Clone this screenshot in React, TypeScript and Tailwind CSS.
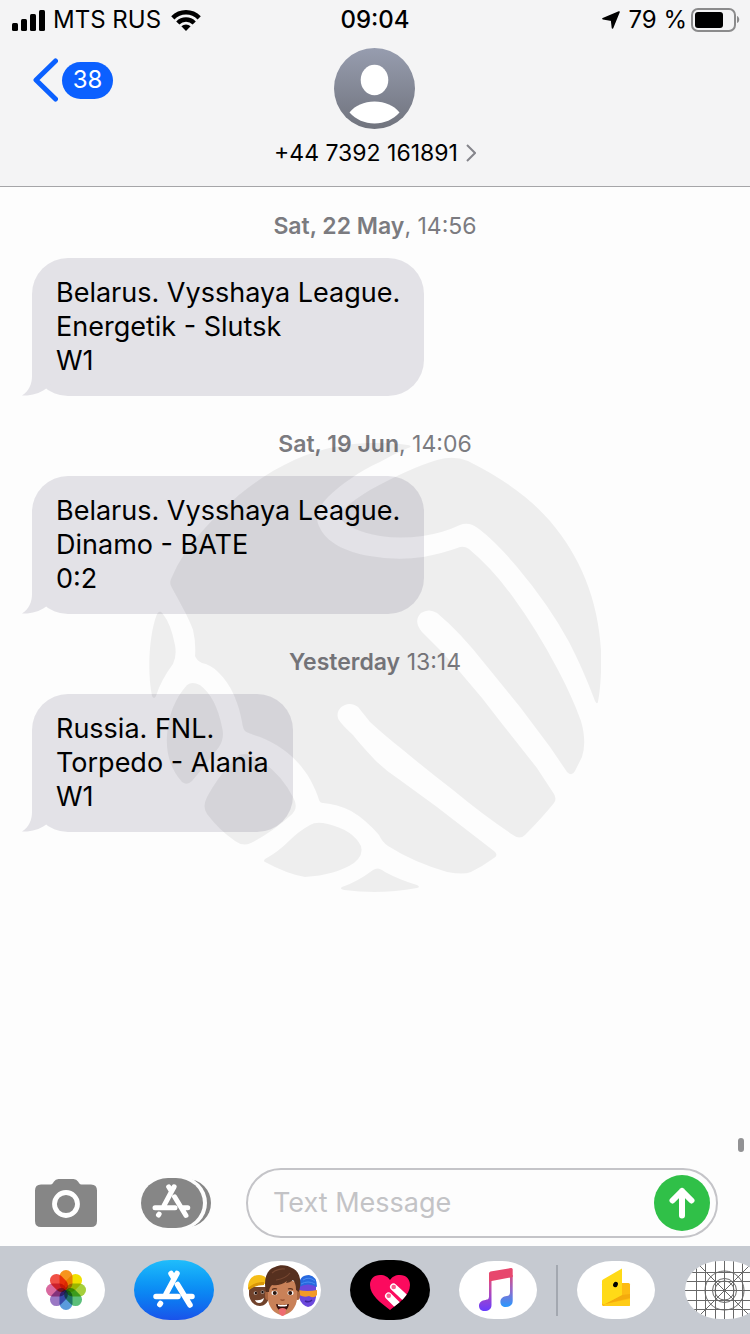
import type { ReactNode } from "react";
import clsx from "clsx";

interface Message {
  day: string;
  time: string;
  lines: string[];
}

const MESSAGES: Message[] = [
  { day: "Sat, 22 May", time: ", 14:56", lines: ["Belarus. Vysshaya League.", "Energetik - Slutsk", "W1"] },
  { day: "Sat, 19 Jun", time: ", 14:06", lines: ["Belarus. Vysshaya League.", "Dinamo - BATE", "0:2"] },
  { day: "Yesterday", time: " 13:14", lines: ["Russia. FNL.", "Torpedo - Alania", "W1"] },
];

const PETALS = ["#f7941d", "#f0e000", "#a5cf3c", "#5cbf7a", "#5a9bdc", "#9a78c4", "#d9699f", "#f05045"];

function StatusBar() {
  return (
    <div className="grid h-10 grid-cols-3 items-center px-2.5 text-2xl">
      <div className="flex items-center gap-2 pl-0.5">
        <svg width="33" height="21" viewBox="0 0 33 21" aria-hidden="true">
          <rect x="0" y="13" width="6" height="8" rx="1.5" />
          <rect x="9" y="9" width="6" height="12" rx="1.5" />
          <rect x="18" y="4" width="6" height="17" rx="1.5" />
          <rect x="27" y="0" width="6" height="21" rx="1.5" />
        </svg>
        <span>MTS RUS</span>
        <svg width="30" height="22" viewBox="0 0 30 22" fill="none" stroke="#000" strokeWidth="4.5" className="ml-0.5" aria-hidden="true">
          <path d="M1.8 8.8a18.6 18.6 0 0 1 26.4 0" />
          <path d="M6.8 14a11.6 11.6 0 0 1 16.4 0" />
          <path d="M15 22l-4.6-4.7a6.5 6.5 0 0 1 9.2 0z" fill="#000" stroke="none" />
        </svg>
      </div>
      <span className="text-center font-medium">09:04</span>
      <div className="flex items-center justify-end">
        <svg width="18" height="18" viewBox="0 0 18 18" className="mr-2" aria-hidden="true">
          <path d="M17 1L1 7.800l8.600 1.400L10.500 17z" stroke="#000" strokeWidth="1.600" strokeLinejoin="round" />
        </svg>
        <span>79 %</span>
        <svg width="49" height="24" viewBox="0 0 49 24" className="ml-1" aria-hidden="true">
          <rect x="1" y="1" width="43" height="22" rx="6" fill="none" stroke="#8b8b8c" strokeWidth="2" />
          <rect x="4" y="4" width="28" height="16" rx="3" />
          <path d="M46 8c3 1 3 6 0 7z" fill="#8b8b8c" />
        </svg>
      </div>
    </div>
  );
}

function Header() {
  return (
    <header className="border-b border-[#a5a5a8] bg-[#f4f4f5]">
      <StatusBar />
      <div className="grid h-[146px] grid-cols-3 items-start px-8 pt-2">
        <a href="#" aria-label="Back, 38 unread" className="flex items-center gap-1 pt-2.5 text-white">
          <svg width="26" height="44" viewBox="0 0 26 44" fill="none" stroke="#0b60ff" strokeWidth="5" strokeLinecap="round" strokeLinejoin="round" aria-hidden="true">
            <path d="M23.500 3L4 22l19.500 19" />
          </svg>
          <span className="flex h-[37px] w-[51px] items-center justify-center rounded-full bg-[#0b60ff] text-2xl">38</span>
        </a>
        <a href="#" className="flex flex-col items-center gap-2 justify-self-center whitespace-nowrap">
          <svg width="81" height="81" viewBox="0 0 81 81" aria-hidden="true">
            <defs>
              <linearGradient id="avatar" x2="0" y2="1">
                <stop stopColor="#979daf" />
                <stop offset="1" stopColor="#70737d" />
              </linearGradient>
            </defs>
            <circle cx="40.5" cy="40.5" r="40.5" fill="url(#avatar)" />
            <ellipse cx="40.5" cy="32" rx="13.8" ry="15.2" fill="#fff" />
            <path d="M15.5 64.5C21 57.5 30 53.5 40.5 53.5S60 57.5 65.5 64.5C59 71.5 50.5 75.5 40.5 75.5S22 71.5 15.5 64.5z" fill="#fff" />
          </svg>
          <span className="flex items-center gap-2 text-[23px] leading-8">
            +44 7392 161891
            <svg width="10" height="18" viewBox="0 0 10 18" fill="none" stroke="#85858b" strokeWidth="2" aria-hidden="true">
              <path d="M1 1l8 8-8 8" />
            </svg>
          </span>
        </a>
      </div>
    </header>
  );
}

function Bubble({ lines }: { lines: string[] }) {
  return (
    <div className="relative w-fit rounded-[36px] bg-[#e3e2e7] px-6 py-[18px] text-[27px] leading-[34px] whitespace-nowrap">
      {lines.map((line) => (
        <p key={line}>{line}</p>
      ))}
      <svg width="34" height="38" viewBox="0 0 34 38" className="absolute bottom-0 -left-2.5" aria-hidden="true">
        <path d="M10 0v18c0 8-3 15-10 19.5 9 .5 17-2 23.5-6.500L34 20V0z" fill="#e3e2e7" />
      </svg>
    </div>
  );
}

function Watermark() {
  return (
    <svg
      width="452"
      height="450"
      viewBox="149 443 452 450"
      className="pointer-events-none absolute top-64 left-1/2 -translate-x-1/2"
      fill="#000"
      fillOpacity="0.06"
      aria-hidden="true"
    >
      <path d="M408 445C412 446 411 447 408 448Q394 454 380 462C360 471 340 485 328 497C318 508 314 518 320 528C326 541 344 552 370 556Q397 561 423 557Q444 553 460 547Q465 546 469 549Q492 568 513 597Q537 630 557 668Q572 696 581 721Q587 742 582 757L575 771Q572 777 567 772L550 747L520 707L485 664Q460 632 437 613Q429 608 421 613Q413 621 422 632Q442 651 460 672Q483 698 503 725L537 768L554 794Q557 799 554 803Q542 818 525 835Q520 840 513 835Q483 815 453 790Q427 770 403 750Q384 735 370 722L358 707C348 699 335 708 338 718Q339 722 353 735Q360 744 375 760Q386 771 400 780L437 807L494 851Q499 855 494 858Q483 866 471 872Q464 875 447 872Q413 862 388 846Q382 842 379 835Q365 819 351 811Q337 804 323 803Q320 803 319 800C310 771 290 749 260 737Q247 733 245 731Q243 729 242 722C239 705 232 685 218 672Q211 665 202 663Q197 661 195 656Q196 643 193 630C189 618 178 599 172 588Q169 584 171 579Q182 552 205 528C240 489 286 455 340 446Q375 440 408 445z" />
      <path d="M370 490Q410 468 437 460Q454 455 468 461C504 479 530 498 550 521C580 556 598 599 601 650Q602 680 598 702Q597 705 595 701Q583 669 569 642Q549 605 517 567Q496 542 479 529Q469 521 460 525Q443 533 423 536Q400 539 380 536Q348 530 340 518Q336 511 370 490z" />
      <path d="M157 614Q160 609 163 614Q171 624 175 645Q177 656 173 664Q161 680 156 696Q154 700 152 696C147 672 149 634 157 614z" />
      <path d="M187 685Q192 681 200 685Q216 697 222 727Q225 738 219 747L202 769L192 781Q187 786 182 782Q165 763 167 735Q169 705 187 685z" />
      <path d="M239 755Q246 752 256 758Q280 771 294 799Q299 809 290 816Q271 833 251 843Q243 847 235 841Q219 830 207 814Q202 807 207 797Q220 773 239 755z" />
      <path d="M310 825Q316 821 328 824Q353 830 361 846Q364 855 354 863Q336 875 305 877Q287 874 265 862Q263 861 265 859Q278 852 290 840Q299 831 310 825z" />
      <path d="M342 887Q357 882 373 870Q378 866 385 872Q400 880 417 885Q421 887 417 888Q380 895 344 890Q339 889 342 887z" />
    </svg>
  );
}

function AppStoreGlyph() {
  return (
    <g fill="none" stroke="#fff" strokeWidth="5.5" strokeLinecap="round" strokeLinejoin="round">
      <path d="M43 13.5L32 34M37 13.5l3 5M43.5 24.5l12.500 20.500M22 36.500H44M51.500 36.500H58M26.500 43.500l-.7 1" />
    </g>
  );
}

function Composer() {
  return (
    <form className="flex items-center pr-8 pb-2 pl-[35px]" onSubmit={(e) => e.preventDefault()}>
      <button type="button" aria-label="Camera">
        <svg width="62" height="48" viewBox="0 0 62 48" aria-hidden="true">
          <path d="M6 5.500h9.500c2 0 2.500-1.500 3.500-3Q20.500 0 23.500 0h15Q41.500 0 43 2.500c1 1.500 1.500 3 3.500 3H56q6 0 6 6V42q0 6-6 6H6q-6 0-6-6V11.500q0-6 6-6z" fill="#868686" />
          <circle cx="31" cy="25" r="11.5" fill="none" stroke="#fff" strokeWidth="4.8" />
        </svg>
      </button>
      <button type="button" aria-label="Apps" className="ml-11">
        <svg width="70" height="50" viewBox="0 0 70 50" aria-hidden="true">
          <rect x="20" y="1" width="50" height="48" rx="24" fill="#868686" />
          <rect x="6" y="-2" width="60" height="54" rx="27" fill="#fdfdfd" />
          <rect width="62" height="50" rx="27" ry="25" fill="#868686" />
          <g transform="translate(-6 -3.500) scale(.91)">
            <AppStoreGlyph />
          </g>
        </svg>
      </button>
      <div className="ml-[35px] flex h-[70px] min-w-0 flex-1 items-center rounded-full border-2 border-[#c4c4c8] pr-1.5 pl-[25px]">
        <input
          type="text"
          aria-label="Text Message"
          placeholder="Text Message"
          className="min-w-0 flex-1 bg-transparent text-[27px] outline-none placeholder:text-[#c3c3c6]"
        />
        <button type="submit" aria-label="Send" className="flex size-14 items-center justify-center rounded-full bg-[#30c048]">
          <svg width="26" height="32" viewBox="0 0 26 32" fill="none" stroke="#fff" strokeWidth="6" strokeLinecap="round" strokeLinejoin="round" aria-hidden="true">
            <path d="M13 28.500V4M3.500 13.500L13 4l9.500 9.500" />
          </svg>
        </button>
      </div>
    </form>
  );
}

function AppButton({ label, wide, className, children }: { label: string; wide?: boolean; className?: string; children: ReactNode }) {
  return (
    <button type="button" aria-label={label} className="flex w-20 shrink-0 justify-center">
      <span
        className={clsx(
          "block overflow-hidden",
          wide ? "h-[60px] w-20 rounded-[36px/30px]" : "h-[58px] w-[78px] rounded-[35px/29px]",
          className ?? "bg-white"
        )}
      >
        {children}
      </span>
    </button>
  );
}

function PhotosIcon() {
  return (
    <svg width="78" height="58" viewBox="-39 -29 78 58" className="isolate" aria-hidden="true">
      {PETALS.map((color, i) => (
        <rect
          key={color}
          x="-6.5"
          y="-20"
          width="13"
          height="20"
          rx="6.5"
          fill={color}
          className="mix-blend-multiply"
          transform={`rotate(${i * 45})`}
        />
      ))}
    </svg>
  );
}

function MemojiIcon() {
  return (
    <svg width="78" height="58" viewBox="0 0 78 58" aria-hidden="true">
      <path d="M6 26h20v10c-1 6-5 9-9 9-6 0-10-5-11-11z" fill="#70422b" />
      <path d="M5 27C5 18 10 14 16 14c6 0 9 4 10 9-7-1-14 1-20 6z" fill="#f5bd18" />
      <path d="M5 27c4-4 10-6 16-6v3c-6 0-11 2-15 5z" fill="#d99708" />
      <ellipse cx="12.5" cy="32" rx="1.8" ry="1.6" fill="#fff" />
      <circle cx="12.8" cy="32" r="1.3" fill="#1b0d08" />
      <ellipse cx="19.5" cy="31" rx="1.8" ry="1.6" fill="#fff" />
      <circle cx="19.5" cy="31" r="1.3" fill="#1b0d08" />
      <path d="M12 39q5 1 9-2-1 5-5 5-3 0-4-3z" fill="#fff" />
      <path d="M56 24q9-7 17 0v12q-1 9-8 10-7-2-9-10z" fill="#6b48dc" />
      <path d="M56 25q0-11 10-11 8 1 8 12-9-5-18 0z" fill="#2869df" />
      <path d="M60 19q6-4 12 1M58 23q7-4 14 0" fill="none" stroke="#4a8cf0" />
      <path d="M55 29q10 2 19 0v5q-3 4-8 1-6 2-11-2z" fill="#f39a27" />
      <path d="M62 40q4 2 7-1" stroke="#3e249c" strokeWidth="1.5" fill="none" />
      <ellipse cx="24.5" cy="34" rx="2.5" ry="5" fill="#a9653f" />
      <ellipse cx="54.5" cy="34" rx="2.5" ry="5" fill="#a9653f" />
      <path d="M25 22q14-8 29 0v15c0 9-7 17-14.5 17S25 46 25 37z" fill="#c98158" />
      <path d="M23 31C20 18 24 8 32 6c5-3 13-2 17 1 8 3 10 13 7 24l-3-2c0-5-1-8-3-10-2 2-5 3-7 3l1-2c-5 4-11 5-15 4-2 2-3 4-3 7z" fill="#56301f" />
      <path d="M33 19c6-1 11-3 14-7M29 12q6-5 13-4" stroke="#754630" strokeWidth="1.2" fill="none" />
      <path d="M29 28.5q2.500-1.500 5-.5M45 28q2.500-1 5 .5" stroke="#5a2f1c" strokeWidth="1.2" fill="none" />
      <ellipse cx="31.500" cy="32" rx="3" ry="2.200" fill="#fff" />
      <circle cx="31.800" cy="32" r="2" fill="#2b150d" />
      <ellipse cx="47.500" cy="32" rx="3" ry="2.200" fill="#fff" />
      <circle cx="47.200" cy="32" r="2" fill="#2b150d" />
      <path d="M37.500 38.500q2 1.500 4 0" stroke="#9b5232" strokeWidth="1.400" fill="none" />
      <path d="M33 43q6.500 2 13 0-1 7-6.500 7T33 43z" fill="#35100d" />
      <path d="M35 43.500q4.500 1 9 0v1.500q-4.500 1-9 0z" fill="#fff" />
      <path d="M36 48q3.500-2 7 0c0 4-1 7-3.500 7S36 52 36 48z" fill="#ee6b70" />
    </svg>
  );
}

function DigitalTouchIcon() {
  return (
    <svg width="80" height="60" viewBox="0 0 80 60" aria-hidden="true">
      <defs>
        <clipPath id="heart">
          <path d="M40 50C31 43 20 35 20 25c0-6 4-10 10-10 5 0 8 2 10 5 2-3 5-5 10-5 6 0 10 4 10 10 0 10-11 18-20 25z" />
        </clipPath>
      </defs>
      <g clipPath="url(#heart)">
        <rect width="80" height="60" fill="#fb0a5e" />
        <path d="M38.500 36l13 13M43.500 27l15 14" stroke="#fff" strokeWidth="7" strokeLinecap="round" />
        <circle cx="38.700" cy="35.700" r="2.300" fill="#f8608f" />
        <circle cx="43.700" cy="27" r="2.300" fill="#f8608f" />
      </g>
    </svg>
  );
}

function MusicIcon() {
  return (
    <svg width="78" height="58" viewBox="0 0 78 58" aria-hidden="true">
      <defs>
        <linearGradient id="noteLeft" gradientUnits="userSpaceOnUse" x1="0" y1="10" x2="0" y2="50">
          <stop stopColor="#f7415c" />
          <stop offset=".4" stopColor="#c64ca5" />
          <stop offset="1" stopColor="#673cff" />
        </linearGradient>
        <linearGradient id="noteRight" gradientUnits="userSpaceOnUse" x1="0" y1="10" x2="0" y2="46">
          <stop stopColor="#e7476d" />
          <stop offset=".5" stopColor="#9a67c6" />
          <stop offset="1" stopColor="#2899ff" />
        </linearGradient>
      </defs>
      <path d="M30 18h2.500v26c0 4-3 6-7 6-3 0-5.500-2-5.500-5 0-4 3-5.500 6.500-6 2.500-.4 3.500-1 3.500-4z" fill="url(#noteLeft)" />
      <path d="M51 14h2.700v26c0 4-3 6-7 6-3 0-5.300-2-5.300-5 0-4 3-5.500 6.300-6 2.300-.4 3.300-1 3.300-4z" fill="url(#noteRight)" />
      <path d="M30 12.500q0-1.500 1.500-2l20.500-3.500q1.700-.2 1.700 1.500v7.500L30 20.500z" fill="#e7476d" />
    </svg>
  );
}

function WalletIcon() {
  return (
    <svg width="78" height="58" viewBox="0 0 78 58" aria-hidden="true">
      <rect x="25" y="22" width="28" height="23" rx="1.5" fill="#fdbb12" />
      <path d="M28 43l25-5v6q0 1-1 1H27z" fill="#ffcc17" />
      <path d="M28 43l17-9 8-1v4z" fill="#f4ab0d" />
      <path d="M25 20q0-1 1-1.500L45 7.500V34L27 43.500q-2 0-2-2z" fill="#ffda17" />
      <ellipse cx="38.500" cy="23.500" rx="2.300" ry="2.800" transform="rotate(25 38.500 23.500)" />
    </svg>
  );
}

function GridIcon() {
  return (
    <svg width="78" height="58" viewBox="0 0 78 58" fill="none" stroke="#686868" strokeWidth="1" aria-hidden="true">
      <path d="M11.500 0v58M20.500 0v58M30.500 0v58M39.500 0v58M48.500 0v58M57.500 0v58M66.500 0v58" />
      <path d="M0 11.500h78M0 20.500h78M0 29.500h78M0 39.500h78M0 48.500h78M10 0l58 58M69 0L11 58" />
      <circle cx="39.500" cy="29.500" r="19.500" />
      <circle cx="39.500" cy="29.500" r="12" />
      <circle cx="39.500" cy="29.500" r="9.500" />
    </svg>
  );
}

function AppDrawer() {
  return (
    <nav aria-label="iMessage apps" className="flex h-[88px] items-center gap-7 overflow-hidden bg-[#c6cad1] pl-[26px]">
      <AppButton label="Photos">
        <PhotosIcon />
      </AppButton>
      <AppButton label="App Store" wide className="bg-linear-to-b from-[#20bdfb] to-[#1a52ea]">
        <svg width="80" height="60" viewBox="0 0 80 60" aria-hidden="true">
          <AppStoreGlyph />
        </svg>
      </AppButton>
      <AppButton label="Memoji">
        <MemojiIcon />
      </AppButton>
      <AppButton label="Digital Touch" wide className="bg-black">
        <DigitalTouchIcon />
      </AppButton>
      <AppButton label="Music">
        <MusicIcon />
      </AppButton>
      <div className="-mx-2.5 h-[51px] w-0.5 shrink-0 bg-[#a3a8b0]" />
      <AppButton label="Wallet">
        <WalletIcon />
      </AppButton>
      <AppButton label="More">
        <GridIcon />
      </AppButton>
    </nav>
  );
}

function App() {
  return (
    <div className="flex min-h-screen w-full flex-col bg-[#fdfdfd] font-['Inter','Liberation_Sans',sans-serif] text-black">
      <Header />
      <main className="relative flex flex-1 flex-col gap-8 px-8 pt-[23px]">
        {MESSAGES.map((message) => (
          <section key={message.day} className="flex flex-col gap-4">
            <h2 className="text-center text-[23px] leading-8 text-[#7b7b80]">
              <span className="font-semibold">{message.day}</span>
              {message.time}
            </h2>
            <Bubble lines={message.lines} />
          </section>
        ))}
        <Watermark />
        <div className="absolute right-1.5 bottom-4 h-3.5 w-1.5 rounded-full bg-[#929294]" />
      </main>
      <Composer />
      <AppDrawer />
    </div>
  );
}

export default App;
